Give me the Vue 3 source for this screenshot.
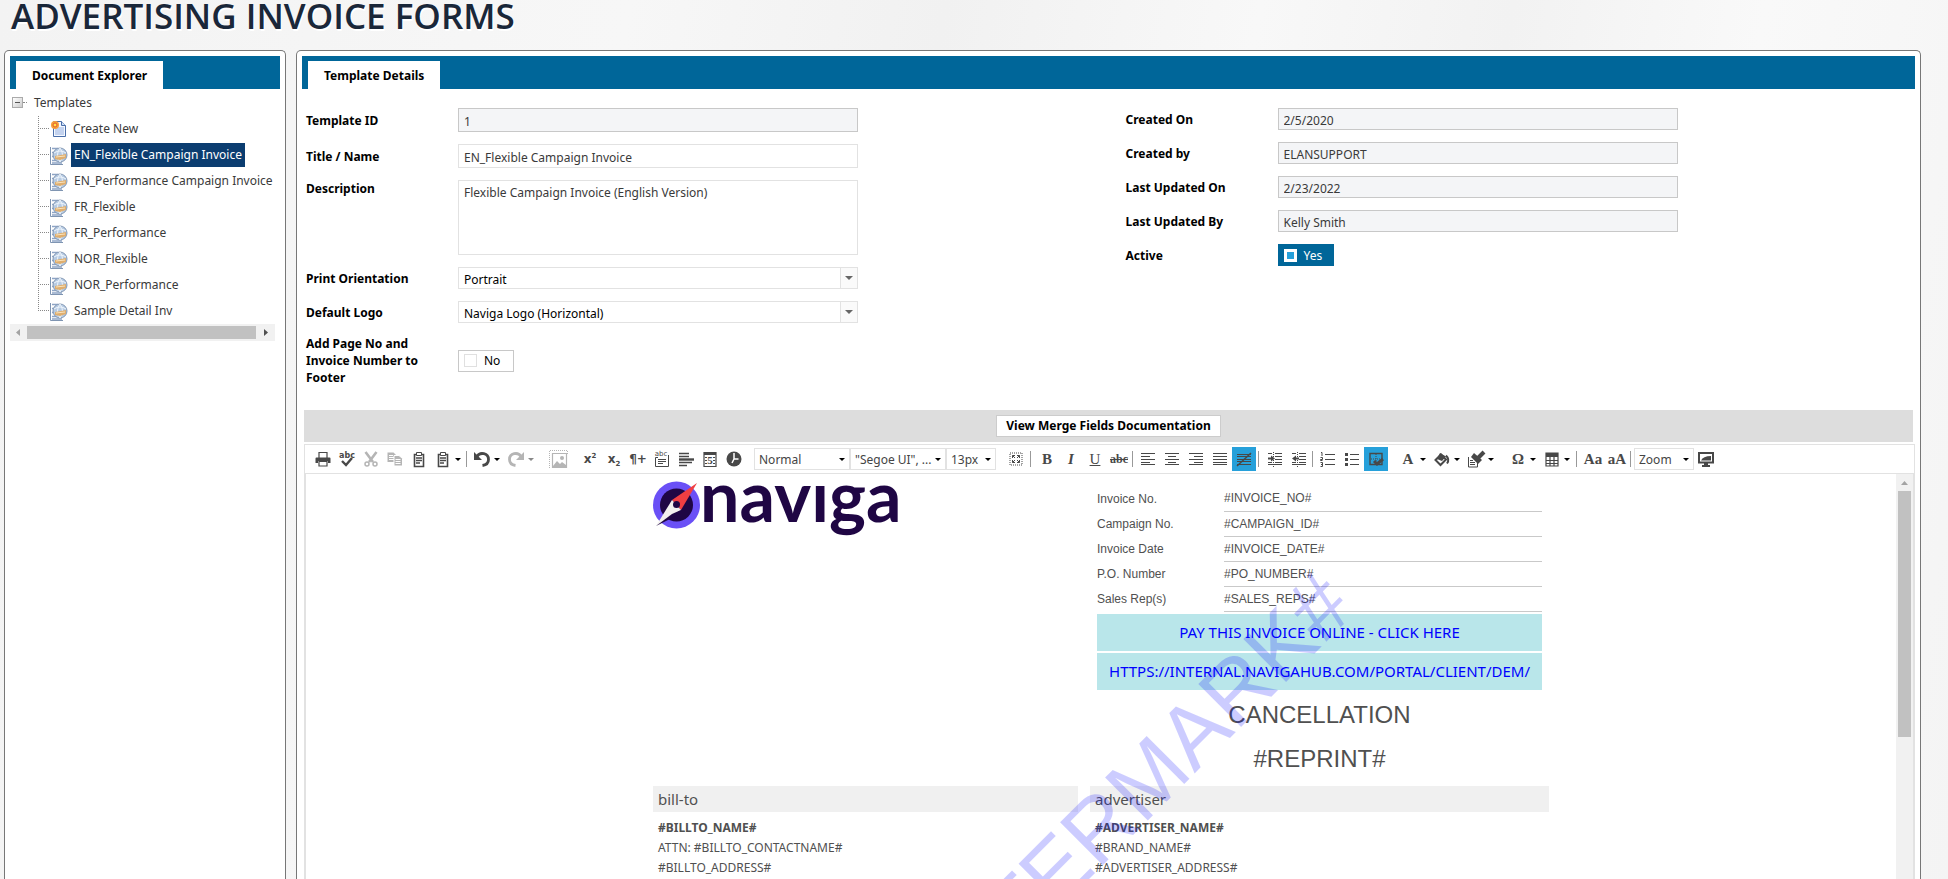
<script setup>
import { ref } from 'vue'

const templates = [
  'EN_Flexible Campaign Invoice',
  'EN_Performance Campaign Invoice',
  'FR_Flexible',
  'FR_Performance',
  'NOR_Flexible',
  'NOR_Performance',
  'Sample Detail Inv',
]
const selected = ref(templates[0])

const title = ref('EN_Flexible Campaign Invoice')
const description = ref('Flexible Campaign Invoice (English Version)')
const pageFooter = ref(false)
const active = ref(true)

const audit = [
  { id: 'created-on', label: 'Created On', value: '2/5/2020' },
  { id: 'created-by', label: 'Created by', value: 'ELANSUPPORT' },
  { id: 'updated-on', label: 'Last Updated On', value: '2/23/2022' },
  { id: 'updated-by', label: 'Last Updated By', value: 'Kelly Smith' },
]

const clipboard =
  '<path d="M3.5 3.5h9v12h-9z" fill="none" stroke="currentColor" stroke-width="1.6"/><path d="M5.5 1.500h5v3h-5z" fill="#fff" stroke="currentColor"/><path d="M5 7h6M5 9.500h6M5 12h4" stroke="currentColor" stroke-width="1.300"/>'

const icons = {
  print: '<path d="M4 7V1.500h8V7" fill="none" stroke="currentColor" stroke-width="1.200"/><path d="M.5 7.500q0-1 1-1h13q1 0 1 1V12h-2.500v-2H3v2H.5z" fill="currentColor"/><path d="M4 10.500h8V15H4z" fill="#fff" stroke="currentColor" stroke-width="1.200"/>',
  spell: '<text x="8" y="7" text-anchor="middle" font-family="DejaVu Sans" font-weight="700" font-size="8" fill="currentColor">abc</text><path d="M3 10l4 4 6-7" fill="none" stroke="currentColor" stroke-width="2.400"/>',
  cut: '<path d="M2.500 1l7.500 10M13.500 1L6 11" stroke="currentColor" stroke-width="2.600"/><circle cx="4" cy="13" r="2" fill="none" stroke="currentColor" stroke-width="1.500"/><circle cx="12" cy="13" r="2" fill="none" stroke="currentColor" stroke-width="1.500"/>',
  copy: '<path d="M.5 1.500h6l2 2V11h-8z" fill="currentColor"/><path d="M2 4.500h4M2 6.500h5M2 8.500h5" stroke="#fff"/><path d="M7 4.500h5l3.500 3V15H7z" fill="currentColor" stroke="#fff"/><path d="M8.500 8.500h5M8.500 10.500h5M8.500 12.500h5" stroke="#fff"/>',
  paste: clipboard,
  pasteOptions: clipboard,
  undo: '<path d="M3 5.500C6 .5 14.500 2 14.500 8.500c0 3.500-2.500 5.500-6 6" fill="none" stroke="currentColor" stroke-width="2.800"/><path d="M0 1v8h8z" fill="currentColor"/>',
  redo: '<path d="M13 5.500C10 .5 1.500 2 1.500 8.500c0 3.500 2.500 5.500 6 6" fill="none" stroke="currentColor" stroke-width="2.800"/><path d="M16 1v8H8z" fill="currentColor"/>',
  image: '<path d="M-.5 17V-.5H17.500V4" fill="none" stroke="currentColor" stroke-dasharray="1 1"/><path d="M2.500 2.500h14v14h-14z" fill="none" stroke="currentColor" stroke-width="1.200"/><path d="M3 15l4-5 3 3 2-2 4 3v3H3z" fill="currentColor"/><circle cx="12" cy="7" r="2" fill="currentColor"/>',
  textBlock: '<text x="7" y="5" text-anchor="middle" font-family="DejaVu Sans" font-size="7" fill="currentColor">abc</text><path d="M4 6.500H1.500v9h13V4" fill="none" stroke="currentColor"/><path d="M4 8.500h8M4 10.500h8M4 12.500h5" stroke="currentColor"/>',
  rule: '<path d="M1 2.500h10M1 5.500h10M1 11.500h13M1 14.500h8" stroke="currentColor" stroke-width="1.400"/><path d="M1 8.500h15" stroke="currentColor" stroke-width="2.400"/>',
  snippet: '<path d="M2 1.500h12v14H2z" fill="none" stroke="currentColor" stroke-width="1.200"/><path d="M2 2.500h12" stroke="currentColor" stroke-width="3"/><path d="M3 6.500h2M3 9.500h2M3 12.500h2M11 6.500h2M11 9.500h2M11 12.500h2" stroke="currentColor"/><text x="8" y="13" text-anchor="middle" font-family="Liberation Serif" font-weight="700" font-size="11" fill="currentColor">5</text>',
  clock: '<circle cx="8" cy="8" r="7.500" fill="currentColor"/><path d="M8 2v6.500M8 8h4.500M8 8l-2 4" stroke="#fff" stroke-width="1.500" fill="none"/>',
  fullscreen: '<path d="M2 2h12v12H2z" fill="none" stroke="currentColor" stroke-dasharray="1 1"/><path d="M4.500 7V4.500H7M9 4.500h2.500V7M11.500 9v2.500H9M7 11.500H4.500V9M4.500 4.500l2.500 2.500M11.500 4.500L9 7M11.500 11.500L9 9M4.500 11.500L7 9" fill="none" stroke="currentColor"/>',
  alignLeft: '<path d="M1 2.500h14M1 5.500h9M1 8.500h14M1 11.500h9M1 13.500h14" stroke="currentColor"/>',
  alignCenter: '<path d="M1 2.500h14M4 5.500h8M1 8.500h14M4 11.500h8M1 13.500h14" stroke="currentColor"/>',
  alignRight: '<path d="M1 2.500h14M6 5.500h9M1 8.500h14M6 11.500h9M1 13.500h14" stroke="currentColor"/>',
  alignJustify: '<path d="M1 2.500h14M1 5.500h14M1 8.500h14M1 11.500h14M1 13.500h14" stroke="currentColor"/>',
  alignNone: '<path d="M1 3.500h14M1 5.500h14M1 8.500h14M1 10.500h14M1 13.500h14" stroke="currentColor"/><path d="M1 15L15 2" stroke="currentColor" stroke-width="1.500"/>',
  indent: '<path d="M1 2.500h4M8 2.500h7M8 5.500h7M8 8.500h7M1 11.500h4M8 11.500h7M1 13.500h14" stroke="currentColor"/><path d="M6.500 1v15" stroke="currentColor" stroke-dasharray="1 1"/><path d="M1 7.500h4" stroke="currentColor" stroke-width="2"/><path d="M4 4.500l4 3-4 3z" fill="currentColor"/>',
  outdent: '<path d="M1 2.500h4M8 2.500h7M8 5.500h7M8 8.500h7M1 11.500h4M8 11.500h7M1 13.500h14" stroke="currentColor"/><path d="M6.500 1v15" stroke="currentColor" stroke-dasharray="1 1"/><path d="M4 7.500h4" stroke="currentColor" stroke-width="2"/><path d="M5 4.500l-4 3 4 3z" fill="currentColor"/>',
  ordered: '<path d="M5 3.500h10M5 8.500h10M5 13.500h10" stroke="currentColor"/><path d="M1 1.500h1V5M.5 6.500h2v2h-2v1h2M.5 11.500h2v4h-2M1 13.500h1" fill="none" stroke="currentColor"/>',
  bullets: '<path d="M6 3.500h9M6 8.500h9M6 13.500h9" stroke="currentColor"/><path d="M1 2h3v3H1zM1 7h3v3H1zM1 12h3v3H1z" fill="currentColor"/>',
  borders: '<path d="M2 2.500h12v11H2z" fill="none" stroke="currentColor" stroke-width="1.400"/><path d="M3 8h10M8 3v10" stroke="currentColor" stroke-dasharray="1 1"/><path d="M6 10l3 3 6-5" fill="none" stroke="currentColor" stroke-width="3"/>',
  fill: '<path d="M1.500 9L7 3.500l5 5L6.500 14z" fill="none" stroke="currentColor" stroke-width="2"/><path d="M6 2l6 3.500L8 10 3 8z" fill="currentColor"/><path d="M12 4.500q4 4 1 8" fill="none" stroke="currentColor" stroke-width="2"/>',
  brush: '<path d="M.5 6v10h9V12" fill="none" stroke="currentColor"/><path d="M2 9.500h3M2 11.500h5M2 13.500h5" stroke="currentColor"/><path d="M6 2l8 7-4 4-7-7z" fill="currentColor"/><path d="M16 1l-6 6" stroke="currentColor" stroke-width="4"/>',
  table: '<path d="M2 2h12v4H2z" fill="currentColor"/><path d="M2 2h12v13H2zM2 9.500h12M2 12.500h12M6 5v10M10 5v10" fill="none" stroke="currentColor" stroke-width="1.200"/>',
  monitor: '<path d="M1 2h14v9.500H1z" fill="none" stroke="currentColor" stroke-width="2"/><path d="M3 9.500Q5 5 13 5v4.500z" fill="currentColor"/><path d="M6 12h4v2H6zM4 14h8v2H4z" fill="currentColor"/>',
}

const tools = [
  { icon: 'print' }, { icon: 'spell' },
  { icon: 'cut', off: true }, { icon: 'copy', off: true },
  { icon: 'paste' }, { icon: 'pasteOptions', menu: true },
  { sep: 'sep' },
  { icon: 'undo', menu: true }, { icon: 'redo', menu: true, off: true },
  { sep: 'space' },
  { icon: 'image', off: true },
  { sep: 'space' },
  { text: 'x', sup: '2', cls: 'script' }, { text: 'x', sub: '2', cls: 'script' },
  { text: '¶+', cls: 'pilcrow' },
  { icon: 'textBlock' }, { icon: 'rule' }, { icon: 'snippet' }, { icon: 'clock' },
  { sep: 'space' },
  { select: 'Normal', name: 'Paragraph style', cls: 'wide' },
  { select: '"Segoe UI", ...', name: 'Font name', cls: 'wide' },
  { select: '13px', name: 'Font size', cls: 'narrow' },
  { sep: 'space' },
  { icon: 'fullscreen' },
  { sep: 'sep loose' },
  { text: 'B', cls: 'serif' }, { text: 'I', cls: 'serif italic' },
  { text: 'U', cls: 'serif underline' }, { text: 'abc', cls: 'serif strike' },
  { sep: 'sep' },
  { icon: 'alignLeft' }, { icon: 'alignCenter' }, { icon: 'alignRight' },
  { icon: 'alignJustify' }, { icon: 'alignNone', on: true },
  { sep: 'sep loose' },
  { icon: 'indent' }, { icon: 'outdent' },
  { sep: 'sep' },
  { icon: 'ordered' }, { icon: 'bullets' }, { icon: 'borders', on: true },
  { sep: 'space' },
  { text: 'A', cls: 'serif', menu: true }, { icon: 'fill', menu: true }, { icon: 'brush', menu: true },
  { sep: 'space' },
  { text: 'Ω', cls: 'serif', menu: true }, { icon: 'table', menu: true },
  { sep: 'sep loose' },
  { text: 'Aa', cls: 'serif' }, { text: 'aA', cls: 'serif' },
  { sep: 'sep' },
  { select: 'Zoom', name: 'Zoom level', cls: 'medium' },
  { icon: 'monitor' },
]

const invoiceRows = [
  ['Invoice No.', '#INVOICE_NO#'],
  ['Campaign No.', '#CAMPAIGN_ID#'],
  ['Invoice Date', '#INVOICE_DATE#'],
  ['P.O. Number', '#PO_NUMBER#'],
  ['Sales Rep(s)', '#SALES_REPS#'],
]
</script>

<template>
  <div class="page">
    <h1>ADVERTISING INVOICE FORMS</h1>
    <div class="panels">
      <aside class="panel explorer">
        <div class="bar"><h2 class="tab">Document Explorer</h2></div>
        <nav class="tree">
          <div class="root">
            <button class="toggle" aria-label="Collapse"></button>
            <span class="stub"></span>
            <a href="#">Templates</a>
          </div>
          <ul>
            <li>
              <svg class="new-icon" width="16" height="18" viewBox="0 0 16 18">
                <path d="M2.500 1.500h8l4 4v11h-12z" fill="#f4f8ff" stroke="#4a6ea9" />
                <path d="M10.500 1.500v4h4" fill="#cfe0f8" stroke="#4a6ea9" />
                <path d="M4 7h9v8H4z" fill="#c3d2ee" />
                <circle cx="4" cy="5" r="4" fill="#f7a13a" />
                <circle cx="4" cy="5" r="2" fill="#ffe14a" stroke="#e4572e" />
              </svg>
              <a href="#" class="create">Create New</a>
            </li>
            <li v-for="name in templates" :key="name">
              <svg class="doc-icon" width="19" height="19" viewBox="0 0 19 19">
                <path d="M1.500 1v17.500H14" fill="none" stroke="#7f95b2" />
                <path d="M3 2.500h6M3 6.500h4M3 10.500h3M3 14.500h10M3 17h10" stroke="#8ea5c6" stroke-width="1.400" />
                <circle cx="11" cy="9" r="7" fill="#b7cbe3" stroke="#8499b5" />
                <path d="M5 7q6-4 12 0M11 2q-5 7 0 14M11 2q5 7 0 14" fill="none" stroke="#eef5fc" />
                <path d="M6 10l6-1 5-1v4l-6 2-5-1z" fill="#dfae6e" />
                <path d="M7 11l9-1" stroke="#fae3bb" />
              </svg>
              <a href="#" :class="{ selected: name === selected }" @click.prevent="selected = name">{{ name }}</a>
            </li>
          </ul>
        </nav>
        <div class="hscroll">
          <svg width="17" height="17"><path d="M10 5v7L6 8.500z" fill="#a3a3a3" /></svg>
          <span class="thumb"></span>
          <svg width="19" height="17"><path d="M8 5v7l4-3.500z" fill="#505050" /></svg>
        </div>
      </aside>

      <main class="panel details">
        <div class="bar"><h2 class="tab">Template Details</h2></div>
        <form class="form" @submit.prevent>
          <div class="fields">
            <label for="tid">Template ID</label>
            <input id="tid" class="tall" value="1" readonly />
            <label for="title">Title / Name</label>
            <input id="title" class="tall" v-model="title" />
            <label for="desc" class="top">Description</label>
            <textarea id="desc" v-model="description"></textarea>
            <label for="orient">Print Orientation</label>
            <div class="drop">
              <select id="orient"><option>Portrait</option></select>
              <span class="arrow"></span>
            </div>
            <label for="logo">Default Logo</label>
            <div class="drop">
              <select id="logo"><option>Naviga Logo (Horizontal)</option></select>
              <span class="arrow"></span>
            </div>
            <label for="footer">Add Page No and Invoice Number to Footer</label>
            <label class="check" :class="{ yes: pageFooter }">
              <input id="footer" type="checkbox" v-model="pageFooter" />{{ pageFooter ? 'Yes' : 'No' }}
            </label>
          </div>
          <div class="fields">
            <template v-for="f in audit" :key="f.id">
              <label :for="f.id">{{ f.label }}</label>
              <input :id="f.id" :value="f.value" readonly />
            </template>
            <label for="active">Active</label>
            <label class="check" :class="{ yes: active }">
              <input id="active" type="checkbox" v-model="active" />{{ active ? 'Yes' : 'No' }}
            </label>
          </div>
        </form>

        <div class="docs"><button>View Merge Fields Documentation</button></div>

        <section class="editor">
          <div class="toolbar">
            <template v-for="(t, i) in tools" :key="i">
              <span v-if="t.sep" :class="t.sep"></span>
              <div v-else-if="t.select" class="pick" :class="t.cls">
                <select :aria-label="t.name"><option>{{ t.select }}</option></select>
                <span class="caret"></span>
              </div>
              <button v-else :class="{ on: t.on, off: t.off }" :aria-label="t.icon">
                <span class="glyph">
                  <svg v-if="t.icon" width="16" height="16" viewBox="0 0 16 16" v-html="icons[t.icon]"></svg>
                  <span v-else :class="t.cls">{{ t.text }}<sup v-if="t.sup">{{ t.sup }}</sup><sub v-if="t.sub">{{ t.sub }}</sub></span>
                </span>
                <span v-if="t.menu" class="menu"><span class="caret"></span></span>
              </button>
            </template>
          </div>
          <div class="canvas">
            <div class="scroller">
              <article class="invoice">
                <div class="brand">
                  <svg width="256" height="66" viewBox="0 0 256 66" role="img" aria-label="naviga">
                    <circle cx="23.500" cy="24" r="23.500" fill="#6a50f6" />
                    <circle cx="23.500" cy="24" r="16.500" fill="#1f0644" />
                    <path d="M44 2L19 19l9 10z" fill="#f03e42" />
                    <path d="M3 45l16-26 9 10z" fill="#f2f0ee" />
                    <path d="M3 45l16-12 9-4-3 5z" fill="#1f0644" />
                    <circle cx="23.500" cy="23.500" r="3.500" fill="#1f0644" />
                    <text x="47" y="41" class="wordmark">navıga</text>
                  </svg>
                </div>
                <div class="summary">
                  <table>
                    <tbody>
                      <tr v-for="r in invoiceRows" :key="r[0]">
                        <th scope="row">{{ r[0] }}</th>
                        <td>{{ r[1] }}</td>
                      </tr>
                    </tbody>
                  </table>
                  <a href="#" class="pay">PAY THIS INVOICE ONLINE - CLICK HERE</a>
                  <a href="#" class="pay">HTTPS://INTERNAL.NAVIGAHUB.COM/PORTAL/CLIENT/DEM/</a>
                  <p class="stamp">CANCELLATION</p>
                  <p class="stamp">#REPRINT#</p>
                </div>
                <div class="party">
                  <h3>bill-to</h3>
                  <p><strong>#BILLTO_NAME#</strong></p>
                  <p>ATTN: #BILLTO_CONTACTNAME#</p>
                  <p>#BILLTO_ADDRESS#</p>
                </div>
                <div class="party">
                  <h3>advertiser</h3>
                  <p><strong>#ADVERTISER_NAME#</strong></p>
                  <p>#BRAND_NAME#</p>
                  <p>#ADVERTISER_ADDRESS#</p>
                </div>
                <div class="watermark">#WATERMARK#</div>
              </article>
            </div>
            <div class="vscroll">
              <svg width="17" height="17"><path d="M5 11h7L8.500 7z" fill="#a3a3a3" /></svg>
              <span class="thumb"></span>
            </div>
          </div>
        </section>
      </main>
    </div>
  </div>
</template>

<style>
body {
  margin: 0;
  overflow: hidden;
}
</style>

<style scoped>
* {
  box-sizing: border-box;
}
.page {
  height: 100vh;
  display: flex;
  flex-direction: column;
  background: linear-gradient(100deg, #f3f3f3 0%, #f7f7f7 30%, #f1f1f1 45%, #f8f8f8 60%, #f2f2f2 72%, #f9f9f9 84%, #f4f4f4 100%);
  font-family: "Noto Sans", "Open Sans", sans-serif;
  font-size: 12px;
  color: #3a3a3a;
}
button, input, select, textarea {
  font: inherit;
  color: inherit;
}
h1 {
  margin: 0;
  padding-left: 11px;
  height: 50px;
  line-height: 32px;
  font-family: "Open Sans", sans-serif;
  font-size: 35px;
  font-weight: 600;
  color: #1a2739;
  text-shadow: 1px 2px 0 #fff;
  white-space: nowrap;
}
.panels {
  flex: 1;
  min-height: 0;
  display: flex;
  gap: 10px;
  padding: 0 27px 0 4px;
}
.panel {
  border: 1px solid #777;
  border-bottom: 0;
  border-radius: 5px 5px 0 0;
  background: #fff;
  padding: 5px 5px 0;
  display: flex;
  flex-direction: column;
}
.explorer {
  width: 282px;
  flex: none;
}
.details {
  flex: 1;
  min-width: 0;
}
.bar {
  height: 33px;
  background: #069;
  padding: 5px 6px 0;
  display: flex;
  flex: none;
}
.tab {
  margin: 0;
  padding: 0 16px;
  background: #fff;
  color: #000;
  font-size: 12px;
  line-height: 29px;
  font-weight: 700;
}

/* Document tree */
a {
  color: inherit;
  text-decoration: none;
}
.tree .root {
  display: flex;
  align-items: center;
  height: 27px;
  padding-left: 2px;
}
.toggle {
  width: 11px;
  height: 11px;
  padding: 0;
  border: 1px solid #aaa;
  background: linear-gradient(#555, #555) center / 5px 1px no-repeat, linear-gradient(135deg, #fff, #ccc);
}
.stub {
  width: 4px;
  margin-right: 7px;
  border-top: 1px dotted #888;
}
.tree ul {
  list-style: none;
  margin: 0;
  padding: 0 0 0 28px;
}
.tree li {
  display: flex;
  align-items: center;
  height: 26px;
  background:
    repeating-linear-gradient(#888 0 1px, transparent 1px 2px) left top / 1px 100% no-repeat,
    repeating-linear-gradient(90deg, #888 0 1px, transparent 1px 2px) left 12px / 11px 1px no-repeat;
  padding-left: 11px;
  white-space: nowrap;
}
.tree li:last-child {
  background-size: 1px 13px, 11px 1px;
}
.tree li a {
  line-height: 24px;
  padding: 0 3px;
  margin-left: 3px;
}
.new-icon {
  margin-left: 2px;
}
.tree li a.selected {
  background: #0b3d70;
  color: #fff;
}
.hscroll {
  display: flex;
  width: 265px;
  height: 17px;
  background: #f1f1f1;
}
.hscroll .thumb {
  flex: 1;
  margin: 2px 0;
  background: #c1c1c1;
}

/* Template form */
.form {
  display: grid;
  grid-template-columns: 1fr 1fr;
  column-gap: 30px;
  padding: 19px 0 0 4px;
  align-items: start;
}
.fields {
  display: grid;
  grid-template-columns: 152px minmax(0, 400px);
  row-gap: 12px;
  align-items: center;
}
.fields > label:not(.check) {
  color: #000;
  font-weight: 700;
  line-height: 17px;
  padding-right: 24px;
}
.fields > label.top {
  align-self: start;
}
.fields > input, .fields textarea, .fields .drop {
  width: 100%;
  height: 22px;
  border: 1px solid #e2e2e2;
  background: #fff;
  padding: 2px 5px 0;
  border-radius: 0;
  outline: none;
}
.fields > input.tall {
  height: 24px;
}
.fields > input[readonly] {
  border-color: #c8c8c8;
  background: #f4f5f7;
}
.fields textarea {
  display: block;
  height: 75px;
  resize: none;
  padding-top: 3px;
  line-height: 17px;
}
.fields .drop {
  display: flex;
  padding: 0;
}
select {
  appearance: none;
  border: 0;
  background: none;
  outline: none;
  padding: 0 5px;
  flex: 1;
  min-width: 0;
}
.drop select {
  color: #000;
  padding-top: 2px;
}
.drop .arrow {
  width: 17px;
  border-left: 1px solid #e2e2e2;
  background: #fafafa;
  display: flex;
  align-items: center;
  justify-content: center;
}
.drop .arrow::after {
  content: "";
  border: 4px solid transparent;
  border-top-color: #666;
  border-bottom: 0;
}
.check {
  justify-self: start;
  display: flex;
  align-items: center;
  gap: 7px;
  width: 56px;
  height: 22px;
  padding-left: 5px;
  border: 1px solid #c8c8c8;
  color: #000;
}
.check input {
  appearance: none;
  margin: 0;
  width: 13px;
  height: 13px;
  border: 1px solid #e0e0e0;
  background: #fff;
}
.check.yes {
  border-color: #069;
  background: #069;
  color: #fff;
}
.check.yes input {
  border: 3px solid #fff;
  background: #26a0da;
}

.docs {
  flex: none;
  margin: 24px 2px 0;
  height: 32px;
  background: #ddd;
  display: flex;
  align-items: center;
  justify-content: center;
}
.docs button {
  height: 22px;
  padding: 0 9px;
  border: 1px solid #ccc;
  background: #fff;
  color: #000;
  font-weight: 700;
  line-height: 18px;
}

/* Rich text editor */
.editor {
  flex: 1;
  min-height: 0;
  margin: 2px 0 0 2px;
  border: 1px solid #e2e2e2;
  border-bottom: 0;
  display: flex;
  flex-direction: column;
}
.toolbar {
  flex: none;
  display: flex;
  align-items: center;
  height: 29px;
  padding-left: 6px;
  border-bottom: 1px solid #e2e2e2;
  overflow: hidden;
}
.toolbar button {
  flex: none;
  display: flex;
  height: 24px;
  padding: 0;
  border: 0;
  background: none;
  color: #484848;
}
.toolbar button.off {
  color: #b5b5b5;
}
.toolbar button.on {
  background: #26a0da;
}
.glyph {
  width: 24px;
  height: 24px;
  display: flex;
  align-items: center;
  justify-content: center;
}
.glyph svg {
  overflow: visible;
}
.menu {
  width: 10px;
  height: 24px;
  display: flex;
  align-items: center;
}
.caret {
  border: 3px solid transparent;
  border-top-color: #000;
  border-bottom: 0;
}
.off .caret {
  border-top-color: #888;
}
.sep {
  flex: none;
  width: 1px;
  height: 16px;
  background: #999;
  margin: 0 3px 0 1px;
}
.sep.loose {
  margin: 0 4px 0 2px;
}
.space {
  flex: none;
  width: 8px;
}
.pick {
  flex: none;
  display: flex;
  align-items: center;
  height: 22px;
  padding-right: 4px;
  border: 1px solid #e2e2e2;
}
.pick select {
  padding: 0 0 0 4px;
  color: #444;
}
.pick.wide {
  width: 96px;
}
.pick.medium {
  width: 60px;
}
.pick.narrow {
  width: 50px;
}
.serif {
  font-family: "Liberation Serif", serif;
  font-weight: 700;
  font-size: 15px;
  line-height: 16px;
}
.italic {
  font-style: italic;
}
.underline {
  text-decoration: underline;
  font-weight: 400;
}
.strike {
  text-decoration: line-through;
  font-size: 12px;
}
.script {
  font-family: "DejaVu Sans", sans-serif;
  font-weight: 700;
  font-size: 12px;
  line-height: 16px;
}
.script sup, .script sub {
  font-size: 7px;
  line-height: 0;
}
.pilcrow {
  font-family: "DejaVu Sans", sans-serif;
  font-weight: 700;
  font-size: 12px;
}
.canvas {
  flex: 1;
  min-height: 0;
  display: flex;
  border-right: 1px solid #e2e2e2;
  border-left: 1px solid #e2e2e2;
}
.scroller {
  flex: 1;
  min-width: 0;
  overflow: hidden;
}
.vscroll {
  width: 17px;
  background: #f1f1f1;
  display: flex;
  flex-direction: column;
}
.vscroll .thumb {
  height: 246px;
  margin: 0 2px;
  background: #c1c1c1;
}

/* Invoice document */
.invoice {
  position: relative;
  width: 896px;
  margin: 0 auto;
  display: grid;
  grid-template-columns: 425fr 459fr;
  column-gap: 12px;
  color: #505050;
}
.brand {
  padding-top: 7px;
}
.wordmark {
  font-family: Lato, sans-serif;
  font-weight: 700;
  font-size: 70px;
  fill: #1f0644;
}
.summary {
  padding: 12px 7px 7px;
}
.summary table {
  width: 100%;
  border-collapse: collapse;
  font-family: "Liberation Sans", Arial, sans-serif;
  font-size: 12px;
}
.summary th {
  width: 127px;
  padding: 0;
  text-align: left;
  font-weight: 400;
}
.summary td {
  height: 25px;
  padding: 0;
  border-bottom: 1px solid #c9c9c9;
}
.pay {
  display: block;
  margin-top: 2px;
  background: #b9e6ea;
  color: #00f;
  font-size: 15px;
  line-height: 37px;
  text-align: center;
  white-space: nowrap;
}
.stamp {
  margin: 5px 0 0;
  font-family: "Liberation Sans", Arial, sans-serif;
  font-size: 24px;
  line-height: 40px;
  text-align: center;
}
.stamp + .stamp {
  margin-top: 4px;
}
.party h3 {
  margin: 0 0 6px;
  padding-left: 5px;
  background: #f0f0f0;
  font-size: 15px;
  line-height: 26px;
  font-weight: 400;
}
.party p {
  margin: 0;
  padding-left: 5px;
  line-height: 20px;
}
.watermark {
  position: absolute;
  top: 63px;
  right: 192px;
  font-family: "Liberation Sans", Arial, sans-serif;
  font-size: 88px;
  line-height: 88px;
  white-space: nowrap;
  color: rgba(0, 0, 255, 0.2);
  transform: rotate(-45deg);
  transform-origin: 100% 74px;
  pointer-events: none;
}
</style>
